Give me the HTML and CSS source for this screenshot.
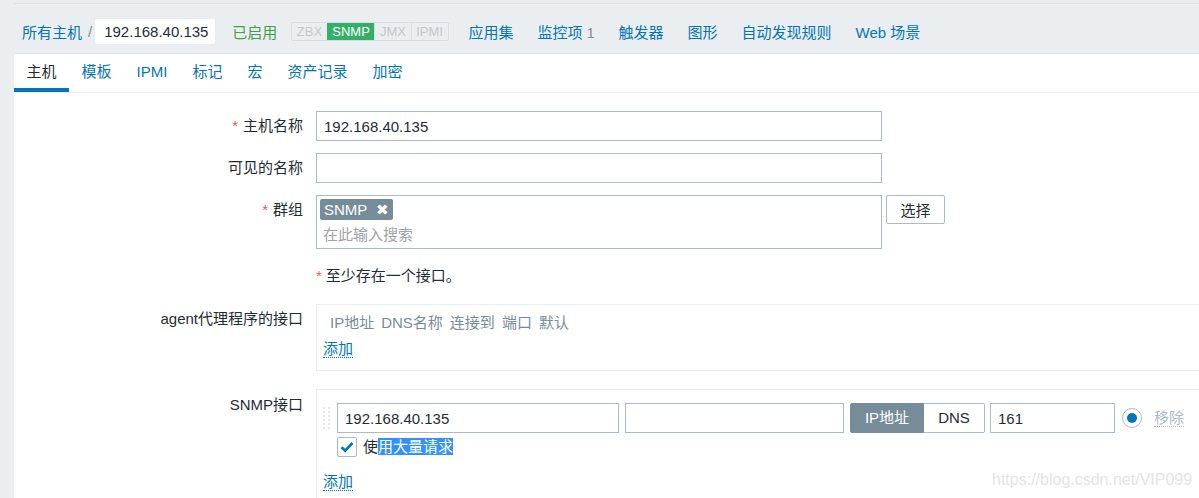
FILE: index.html
```html
<!DOCTYPE html>
<html lang="zh-CN">
<head>
<meta charset="utf-8">
<title>主机</title>
<link rel="stylesheet" href="styles.css">
</head>
<body>
<div class="topline"></div>
<header class="hdr">
  <a class="lnk crumb">所有主机</a><span class="sep">/</span><span class="crumb-cur">192.168.40.135</span>
  <span class="status">已启用</span>
  <div class="avail"><span>ZBX</span><span class="on">SNMP</span><span>JMX</span><span>IPMI</span></div>
  <nav class="menu">
    <a class="lnk">应用集</a>
    <a class="lnk">监控项 <span class="cnt">1</span></a>
    <a class="lnk">触发器</a>
    <a class="lnk">图形</a>
    <a class="lnk">自动发现规则</a>
    <a class="lnk">Web 场景</a>
  </nav>
</header>
<main class="panel">
  <ul class="tabs">
    <li class="tab active">主机</li>
    <li class="tab">模板</li>
    <li class="tab">IPMI</li>
    <li class="tab">标记</li>
    <li class="tab">宏</li>
    <li class="tab">资产记录</li>
    <li class="tab">加密</li>
  </ul>
  <form class="form">
    <div class="row">
      <label class="lbl"><span class="req">*</span>主机名称</label>
      <input class="inp w-main" type="text" value="192.168.40.135">
    </div>
    <div class="row">
      <label class="lbl">可见的名称</label>
      <input class="inp w-main" type="text" value="">
    </div>
    <div class="row">
      <label class="lbl"><span class="req">*</span>群组</label>
      <div class="ms">
        <span class="tag">SNMP<span class="tag-x">✖</span></span>
        <div class="ms-ph">在此输入搜索</div>
      </div>
      <button class="btn" type="button">选择</button>
    </div>
    <div class="row msg"><span class="req">*</span>至少存在一个接口。</div>
    <div class="row">
      <label class="lbl">agent代理程序的接口</label>
      <div class="ifbox agent">
        <div class="ifhead"><span>IP地址</span><span>DNS名称</span><span>连接到</span><span>端口</span><span>默认</span></div>
        <a class="add">添加</a>
      </div>
    </div>
    <div class="row snmp-row">
      <label class="lbl">SNMP接口</label>
      <div class="ifbox snmp">
        <div class="ifline">
          <svg class="handle" width="7" height="22" viewBox="0 0 7 22">
            <g fill="#e3e7ea">
              <rect x="0" y="0" width="2" height="2"/><rect x="5" y="0" width="2" height="2"/>
              <rect x="0" y="4" width="2" height="2"/><rect x="5" y="4" width="2" height="2"/>
              <rect x="0" y="8" width="2" height="2"/><rect x="5" y="8" width="2" height="2"/>
              <rect x="0" y="12" width="2" height="2"/><rect x="5" y="12" width="2" height="2"/>
              <rect x="0" y="16" width="2" height="2"/><rect x="5" y="16" width="2" height="2"/>
              <rect x="0" y="20" width="2" height="2"/><rect x="5" y="20" width="2" height="2"/>
            </g>
          </svg>
          <input class="inp w-ip" type="text" value="192.168.40.135">
          <input class="inp w-dns" type="text" value="">
          <div class="toggle"><span class="t-on">IP地址</span><span class="t-off">DNS</span></div>
          <input class="inp w-port" type="text" value="161">
          <span class="radio"><span class="radio-dot"></span></span>
          <a class="remove">移除</a>
        </div>
        <div class="bulk">
          <span class="cb">
            <svg width="14" height="12" viewBox="0 0 14 12"><path d="M1.5 6.2 L5.2 9.6 L12.5 2" fill="none" stroke="#0275b8" stroke-width="2.6"/></svg>
          </span>
          <span class="bulk-txt">使<span class="sel">用大量请求</span></span>
        </div>
        <a class="add add2">添加</a>
      </div>
    </div>
  </form>
</main>
<div class="watermark">https://blog.csdn.net/VIP099</div>
</body>
</html>
```

FILE: styles.css
```css
html, body {
  margin: 0;
  padding: 0;
  height: 498px;
  overflow: hidden;
}
body {
  background: #ebeef0;
  font-family: "Liberation Sans", "Noto Sans CJK SC", sans-serif;
  font-size: 15px;
  color: #1f2c33;
  position: relative;
}
.topline {
  margin: 3px 0 0 14px;
  border-top: 1px solid #dde1e4;
}
.hdr {
  display: flex;
  align-items: center;
  height: 25px;
  margin-top: 15px;
  padding-left: 22px;
  margin-bottom: 9px;
}
.lnk {
  color: #0275b8;
  text-decoration: none;
  white-space: nowrap;
}
.sep {
  margin: 0 3px 0 6px;
  color: #768d99;
}
.crumb-cur {
  background: #fff;
  border-radius: 2px;
  height: 25px;
  line-height: 25px;
  width: 120px;
  box-sizing: border-box;
  padding-left: 9px;
}
.status {
  color: #429e47;
  margin-left: 17px;
}
.avail {
  display: flex;
  margin-left: 14px;
  border: 1px solid #d9dee1;
  border-radius: 2px;
  height: 19px;
  box-sizing: border-box;
  font-size: 13px;
  line-height: 17px;
}
.avail span {
  padding: 0 4.6px;
  color: #c1c9ce;
  border-left: 1px solid #d9dee1;
}
.avail span:first-child {
  border-left: none;
}
.avail span.on {
  background: #34af67;
  color: #fff;
  border-left-color: #34af67;
}
.menu {
  display: flex;
  gap: 24px;
  margin-left: 20px;
}
.cnt {
  color: #768d99;
  font-size: 14px;
}
.panel {
  margin-left: 14px;
  background: #fff;
  border-top: 1px solid #dfe4e7;
  height: 600px;
}
.tabs {
  list-style: none;
  margin: 0;
  padding: 0;
  display: flex;
  height: 38px;
  border-bottom: 1px solid #ebeef0;
}
.tab {
  padding: 0 12.5px;
  line-height: 36px;
  color: #0275b8;
}
.tab.active {
  color: #1f2c33;
  box-shadow: inset 0 -4px 0 #0275b8;
}
.form {
  padding-top: 18px;
}
.row {
  display: flex;
  align-items: flex-start;
  margin-bottom: 12px;
}
.row > * {
  flex: none;
}
.lbl {
  width: 289px;
  margin-right: 13px;
  text-align: right;
  line-height: 30px;
  white-space: nowrap;
}
.req {
  color: #e45959;
  margin-right: 5px;
}
.inp {
  flex: none;
  height: 30px;
  box-sizing: border-box;
  border: 1px solid #acbbc3;
  border-radius: 0;
  padding: 0 7px;
  font: inherit;
  color: #1f2c33;
  background: #fff;
  outline: none;
  margin: 0;
}
.w-main { width: 566px; }
.ms {
  width: 566px;
  height: 54px;
  box-sizing: border-box;
  border: 1px solid #acbbc3;
  padding: 3px;
}
.tag {
  display: inline-block;
  background: #768d99;
  color: #fff;
  border-radius: 2px;
  height: 21px;
  line-height: 21px;
  padding: 0 4px 0 4px;
}
.tag-x {
  margin-left: 9px;
  font-size: 15px;
}
.ms-ph {
  color: #a0a4a8;
  line-height: 18px;
  margin-top: 6px;
  padding-left: 3px;
}
.btn {
  margin-left: 4px;
  width: 59px;
  height: 29px;
  border: 1px solid #acbbc3;
  border-radius: 2px;
  background: #fff;
  font: inherit;
  color: #1f2c33;
  padding: 0;
}
.msg {
  padding-left: 302px;
  line-height: 30px;
  margin-bottom: 13px;
}
.msg .req {
  margin-right: 4px;
}
.ifbox {
  width: 900px;
  box-sizing: border-box;
  border: 1px solid #ebeef0;
}
.agent {
  padding: 8px 0 12px 6px;
}
.ifhead {
  display: flex;
  gap: 7px;
  padding-left: 7px;
  line-height: 20px;
  color: #768d99;
}
.add {
  display: inline-block;
  color: #0275b8;
  line-height: 17px;
  border-bottom: 1px dotted #0275b8;
  margin-top: 7px;
}
.snmp-row {
  margin-top: 18px;
}
.snmp-row .lbl {
  padding-top: 1px;
}
.snmp {
  padding: 13px 0 20px 6px;
}
.ifline {
  display: flex;
  align-items: center;
}
.handle {
  flex: none;
}
.w-ip { width: 282px; margin-left: 7px; }
.w-dns { width: 219px; margin-left: 6px; }
.toggle {
  flex: none;
  display: flex;
  margin-left: 6px;
  height: 30px;
  box-sizing: border-box;
  line-height: 28px;
}
.t-on {
  width: 74px;
  background: #768d99;
  color: #fff;
  text-align: center;
  border: 1px solid #768d99;
  border-radius: 2px 0 0 2px;
  box-sizing: border-box;
}
.t-off {
  width: 61px;
  text-align: center;
  border: 1px solid #acbbc3;
  border-left: none;
  border-radius: 0 2px 2px 0;
  box-sizing: border-box;
}
.w-port { width: 125px; margin-left: 5px; }
.radio {
  flex: none;
  margin-left: 7px;
  width: 20px;
  height: 20px;
  box-sizing: border-box;
  border: 1px solid #acbbc3;
  border-radius: 50%;
  display: flex;
  align-items: center;
  justify-content: center;
}
.radio-dot {
  width: 10px;
  height: 10px;
  border-radius: 50%;
  background: #0275b8;
}
.remove {
  flex: none;
  margin-left: 12px;
  color: #acbbc3;
  line-height: 17px;
  border-bottom: 1px dotted #acbbc3;
}
.bulk {
  display: flex;
  align-items: center;
  margin-top: 3px;
  margin-left: 14px;
}
.cb {
  flex: none;
  width: 20px;
  height: 20px;
  box-sizing: border-box;
  border: 1px solid #acbbc3;
  border-radius: 2px;
  display: flex;
  align-items: center;
  justify-content: center;
}
.bulk-txt {
  margin-left: 6px;
  line-height: 21px;
}
.sel {
  background: #3390ff;
  color: #fff;
}
.add2 {
  margin-top: 16px;
}
.watermark {
  position: absolute;
  left: 992px;
  top: 471px;
  font-size: 16px;
  line-height: 18px;
  color: #e4e4e4;
  white-space: nowrap;
}
```
